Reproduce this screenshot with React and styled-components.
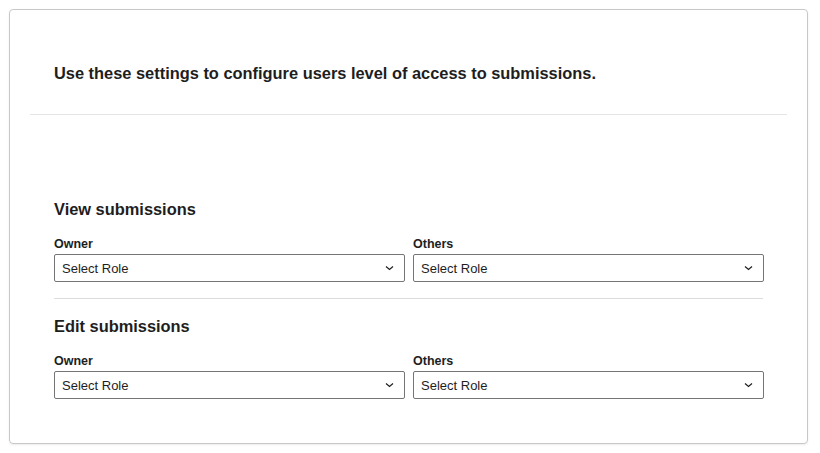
import React from "react";
import styled, { createGlobalStyle } from "styled-components";

const Global = createGlobalStyle`
  body { margin: 0; font-family: "Liberation Sans", Arial, sans-serif; color: #1e1e1e; background: #fff; }
`;
const Card = styled.div`
  margin: 9px; width: 799px; height: 435px; box-sizing: border-box;
  border: 1px solid #c8c8c8; border-radius: 4px; box-shadow: 0 1px 2px rgba(0,0,0,0.08);
  padding: 0 20px;
`;
const Header = styled.div`
  padding: 54px 24px 32px; border-bottom: 1px solid #e4e4e4;
`;
const Intro = styled.h2`
  margin: 0; font-size: 16.4px; line-height: 18px; font-weight: 700;
`;
const Body = styled.div` padding: 85px 24px 0; `;
const Section = styled.div`
  padding-bottom: ${p => (p.$divider ? "16px" : "0")};
  margin-bottom: ${p => (p.$divider ? "18px" : "0")};
  border-bottom: ${p => (p.$divider ? "1px solid #dcdcdc" : "none")};
`;
const Title = styled.h3`
  margin: 0 0 19px; font-size: 16.4px; line-height: 18px; font-weight: 700;
`;
const Row = styled.div` display: grid; grid-template-columns: 351px 351px; gap: 8px; `;
const Field = styled.div` display: flex; flex-direction: column; `;
const Label = styled.label`
  font-size: 12.5px; line-height: 14px; font-weight: 700; margin-bottom: 3px;
`;
const Select = styled.div`
  height: 28px; box-sizing: border-box; border: 1px solid #757575; border-radius: 2px;
  display: flex; align-items: center; justify-content: space-between; padding: 0 10px 0 7px;
  font-size: 13px;
`;
const Chevron = () => (
  <svg width="9" height="6" viewBox="0 0 9 6"><path d="M1 1.5l3.5 3 3.5-3" fill="none" stroke="#1e1e1e" strokeWidth="1.2"/></svg>
);
const Sel = ({ label }) => (
  <Field><Label>{label}</Label><Select>Select Role<Chevron /></Select></Field>
);

export default function App() {
  return (
    <>
      <Global />
      <Card>
        <Header><Intro>Use these settings to configure users level of access to submissions.</Intro></Header>
        <Body>
          <Section $divider>
            <Title>View submissions</Title>
            <Row><Sel label="Owner" /><Sel label="Others" /></Row>
          </Section>
          <Section>
            <Title>Edit submissions</Title>
            <Row><Sel label="Owner" /><Sel label="Others" /></Row>
          </Section>
        </Body>
      </Card>
    </>
  );
}
